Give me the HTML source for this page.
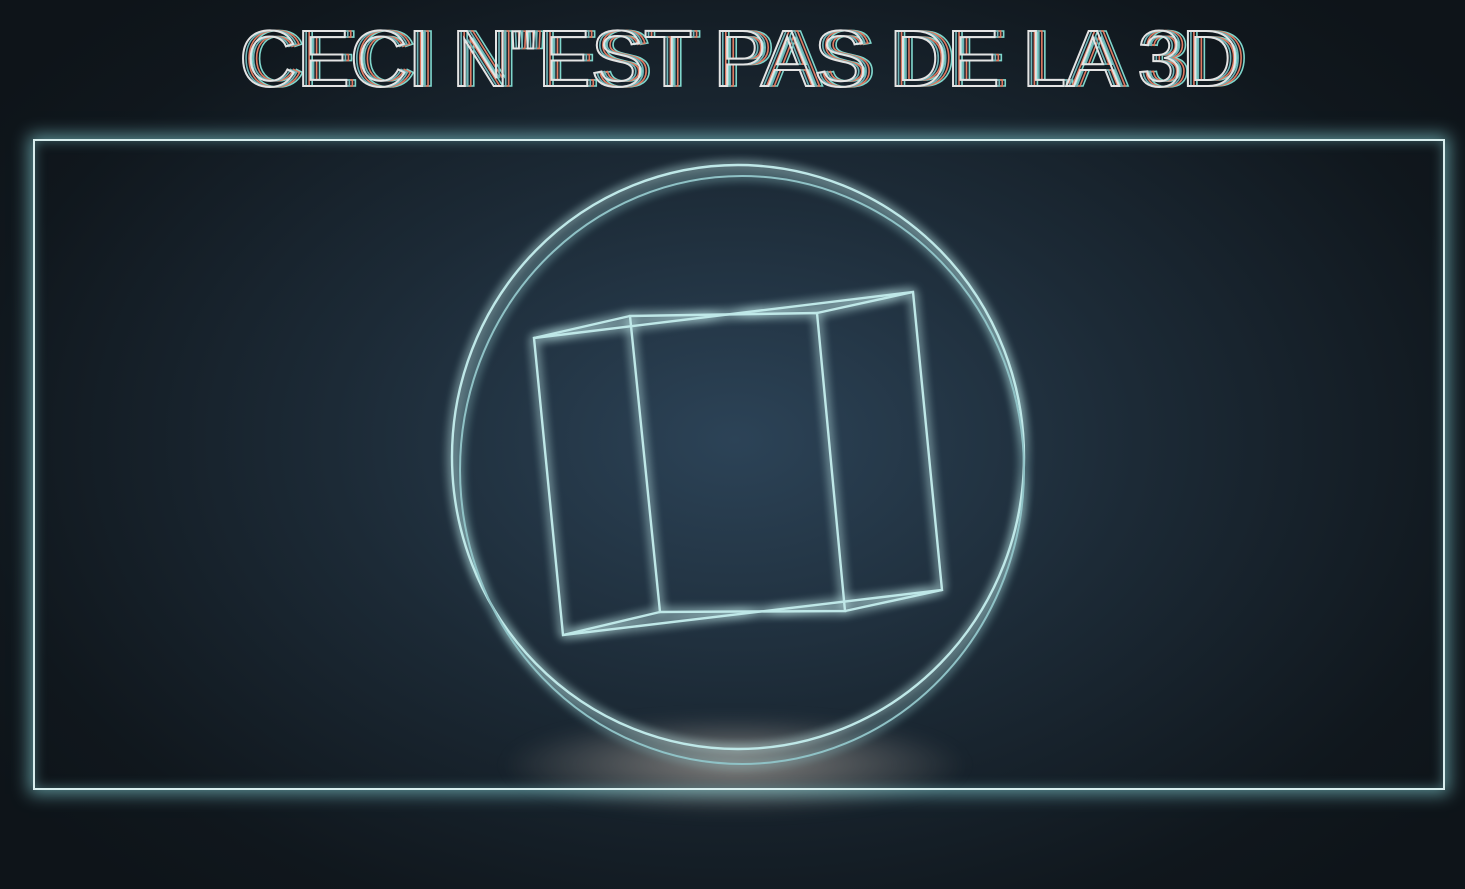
<!DOCTYPE html>
<html><head><style>
html,body{margin:0;padding:0;width:1465px;height:889px;overflow:hidden;background:radial-gradient(ellipse 900px 600px at 735px 440px,#2c4357 0%,#1c2a36 45%,#10171d 85%,#0e1419 100%);}
.frame{position:absolute;left:33px;top:139px;width:1408px;height:647px;border:2px solid #d8eeee;box-shadow:0 0 16px 4px rgba(140,220,225,0.6),inset 0 0 12px rgba(140,220,225,0.4);}
.spot{position:absolute;left:500px;top:715px;width:470px;height:100px;background:radial-gradient(ellipse at center,rgba(190,180,170,0.65),rgba(180,170,160,0) 70%);filter:blur(8px);}
svg{position:absolute;left:0;top:0}
</style></head><body>
<div class="spot"></div>
<div class="frame"></div>
<svg width="1465" height="889">
<defs><filter id="g" x="-20%" y="-20%" width="140%" height="140%"><feGaussianBlur stdDeviation="5" result="b"/><feMerge><feMergeNode in="b"/><feMergeNode in="b"/><feMergeNode in="SourceGraphic"/></feMerge></filter></defs>
<g font-family="Liberation Sans, sans-serif" font-size="80" fill="none" stroke-width="1.6">
<text x="248" y="86" textLength="1000" lengthAdjust="spacingAndGlyphs" stroke="#7fd6cc">CECI N"EST PAS DE LA 3D</text>
<text x="245" y="86" textLength="1000" lengthAdjust="spacingAndGlyphs" stroke="#e07a62">CECI N"EST PAS DE LA 3D</text>
<text x="242" y="86" textLength="1000" lengthAdjust="spacingAndGlyphs" stroke="#6fb5b8">CECI N"EST PAS DE LA 3D</text>
<text x="239" y="86" textLength="1000" lengthAdjust="spacingAndGlyphs" stroke="#e4e4e4" stroke-width="2">CECI N"EST PAS DE LA 3D</text>
</g>
<g fill="none" stroke="#bfe8e8" stroke-width="2.4" filter="url(#g)">
<ellipse cx="738" cy="457" rx="286" ry="292"/>
<ellipse cx="742" cy="470" rx="282" ry="294" stroke="#8fc2c6" stroke-width="2"/>
<path d="M534 338 L913 292 L942 590 L563 635 Z"/>
<path d="M630 316 L817 313 L845 611 L660 612 Z"/>
<path d="M534 338 L630 316 M913 292 L817 313 M942 590 L845 611 M563 635 L660 612"/>
</g>
</svg>
</body></html>
